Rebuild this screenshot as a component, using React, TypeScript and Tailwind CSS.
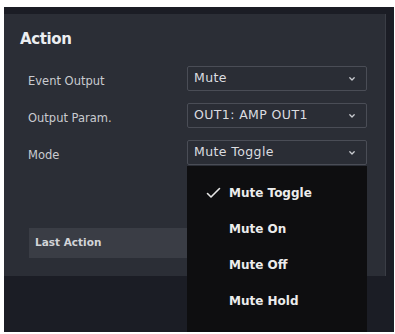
import React from 'react';

const rows = [
  { label: 'Event Output', value: 'Mute' },
  { label: 'Output Param.', value: 'OUT1: AMP OUT1' },
  { label: 'Mode', value: 'Mute Toggle' },
];

const options = ['Mute Toggle', 'Mute On', 'Mute Off', 'Mute Hold'];

const Chevron = () => (
  <svg width="8" height="6" viewBox="0 0 8 6" className="text-[#c9cbd0]">
    <path d="M1.8 1.8 L4 4 L6.2 1.8" fill="none" stroke="currentColor" strokeWidth="1.3" strokeLinecap="round" strokeLinejoin="round" />
  </svg>
);

const Check = () => (
  <svg width="15" height="12" viewBox="0 0 15 12" className="text-[#e6e6e6]">
    <path d="M1.5 6.5 L5 10 L13.5 1.5" fill="none" stroke="currentColor" strokeWidth="1.6" strokeLinecap="round" strokeLinejoin="round" />
  </svg>
);

export default function App() {
  return (
    <div className="w-[395px] h-[334px] bg-white pt-[7px] pl-[4px] pr-[1px] pb-[2px]" style={{ fontFamily: '"DejaVu Sans", sans-serif' }}>
      <div className="relative h-full bg-[#1b1d25] flex flex-col">
        <div className="mt-[7px] mr-[8px] h-[262px] bg-[#2b2e36] border-r border-[#3a3d45] pl-[16px] pt-[16px]">
          <div className="text-[15px] font-bold text-[#eceef1] leading-[18px] tracking-tight">Action</div>
          <div className="mt-[18px] pl-[8px] flex flex-col gap-[12px]">
            {rows.map((r) => (
              <div key={r.label} className="flex items-center h-[25px]">
                <div className="w-[159px] text-[11.5px] text-[#c9cbd0] pt-[6px]">{r.label}</div>
                <div className="w-[180px] h-[25px] border border-[#4a4d56] rounded-[2px] bg-[#2a2d35] flex items-center justify-between pl-[6px] pr-[10px]">
                  <span className="text-[12.5px] text-[#dcdde0] tracking-[0.4px]">{r.value}</span>
                  <Chevron />
                </div>
              </div>
            ))}
          </div>
          <div className="mt-[63px] ml-[9px] w-[200px] h-[30px] bg-[#3a3d45] flex items-center pl-[6px]">
            <span className="text-[10.5px] font-semibold text-[#d2d4d8]">Last Action</span>
          </div>
        </div>
        <div className="absolute left-[183px] top-[159px] bottom-0 w-[180px] bg-[#0e0e10] pt-[9px]">
          {options.map((o, i) => (
            <div key={o} className="h-[36px] flex items-center">
              <div className="w-[42px] flex justify-end pr-[8px]">{i === 0 && <Check />}</div>
              <span className="text-[12px] font-semibold text-[#ececec]">{o}</span>
            </div>
          ))}
        </div>
      </div>
    </div>
  );
}
